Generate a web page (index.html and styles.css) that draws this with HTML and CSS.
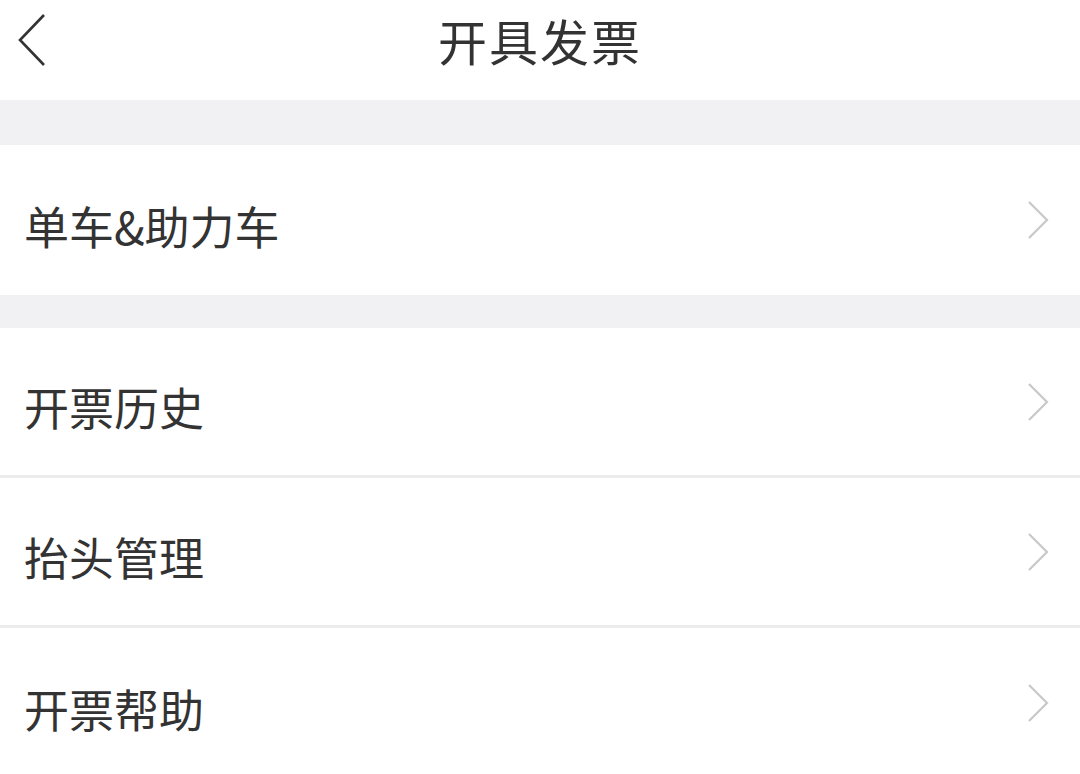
FILE: index.html
```html
<!DOCTYPE html>
<html lang="zh-CN">
<head>
  <meta charset="UTF-8" />
  <meta name="viewport" content="width=device-width, initial-scale=1" />
  <title>开具发票</title>
  <link rel="stylesheet" href="styles.css">
</head>
<body>

  <header class="nav-bar">
    <a class="back-btn" href="#">
      <svg width="30" height="54" viewBox="0 0 30 54">
        <polyline points="26,2 2,27 26,52" fill="none" stroke="#333" stroke-width="2.6" />
      </svg>
    </a>
    <h1 class="nav-title">开具发票</h1>
  </header>

  <div class="gap gap-top"></div>

  <div class="menu-group">
    <a class="menu-item item-tall" href="#">
      <span class="menu-label">单车&amp;助力车</span>
      <svg class="arrow" width="24" height="40" viewBox="0 0 24 40">
        <polyline points="3,2 21,20 3,38" fill="none" stroke="#c8c8c8" stroke-width="2.2" />
      </svg>
    </a>
  </div>

  <div class="gap gap-mid"></div>

  <div class="menu-group">
    <a class="menu-item" href="#">
      <span class="menu-label">开票历史</span>
      <svg class="arrow" width="24" height="40" viewBox="0 0 24 40">
        <polyline points="3,2 21,20 3,38" fill="none" stroke="#c8c8c8" stroke-width="2.2" />
      </svg>
    </a>
    <a class="menu-item" href="#">
      <span class="menu-label">抬头管理</span>
      <svg class="arrow" width="24" height="40" viewBox="0 0 24 40">
        <polyline points="3,2 21,20 3,38" fill="none" stroke="#c8c8c8" stroke-width="2.2" />
      </svg>
    </a>
    <a class="menu-item" href="#">
      <span class="menu-label">开票帮助</span>
      <svg class="arrow" width="24" height="40" viewBox="0 0 24 40">
        <polyline points="3,2 21,20 3,38" fill="none" stroke="#c8c8c8" stroke-width="2.2" />
      </svg>
    </a>
  </div>

</body>
</html>
```

FILE: styles.css
```css
/* Reset básico */
* {
  box-sizing: border-box;
}

body {
  margin: 0;
  background: #ffffff;
  font-family: "Noto Sans CJK SC", "Noto Sans", sans-serif;
  color: #333333;
}

a {
  color: inherit;
  text-decoration: none;
}

.nav-bar {
  position: relative;
  height: 100px;
  display: flex;
  align-items: center;
  justify-content: center;
  background: #ffffff;
}

.back-btn {
  position: absolute;
  left: 18px;
  top: 13px;
  display: flex;
}

.nav-title {
  margin: 0;
  font-size: 49px;
  font-weight: 400;
  color: #333333;
  letter-spacing: 2px;
  padding-bottom: 22px;
}

.gap {
  background: #f1f1f3;
}

.gap-top {
  height: 45px;
}

.gap-mid {
  height: 33px;
}

.menu-item {
  display: flex;
  align-items: center;
  justify-content: space-between;
  height: 150px;
  padding: 0 30px 0 24px;
  border-bottom: 3px solid #ececec;
}

.menu-item:last-child {
  border-bottom: none;
}

.item-tall {
  height: 150px;
}

.menu-label {
  font-size: 45px;
  padding-top: 10px;
}

.arrow {
  display: block;
}
```
